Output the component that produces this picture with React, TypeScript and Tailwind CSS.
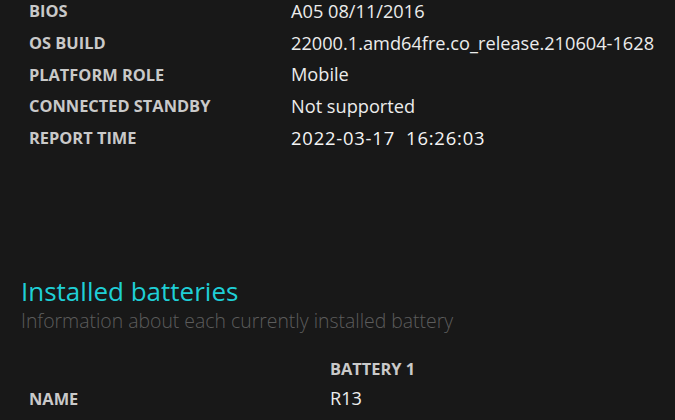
import React from "react";

const rows: [string, string][] = [
  ["BIOS", "A05 08/11/2016"],
  ["OS BUILD", "22000.1.amd64fre.co_release.210604-1628"],
  ["PLATFORM ROLE", "Mobile"],
  ["CONNECTED STANDBY", "Not supported"],
];

export default function App() {
  return (
    <div
      className="w-[675px] h-[420px] overflow-hidden bg-[#181818]"
      style={{ fontFamily: '"Open Sans", "Noto Sans", sans-serif' }}
    >
      <div className="-mt-[4px] pl-[29px]">
        {rows.map(([k, v]) => (
          <div key={k} className="flex items-center h-[31.6px]">
            <div className="w-[262px] text-[16.4px] font-bold text-[#c9c9c9]">{k}</div>
            <div className="text-[18.2px] text-[#ececec] whitespace-pre">{v}</div>
          </div>
        ))}
        <div className="flex items-center h-[31.6px]">
          <div className="w-[262px] text-[16.4px] font-bold text-[#c9c9c9]">REPORT TIME</div>
          <div className="text-[18.4px] font-medium tracking-[0.8px] text-[#f4f4f4] whitespace-pre">
            {"2022-03-17\u00a0\u00a016:26:03"}
          </div>
        </div>
      </div>
      <div className="mt-[122px] pl-[21px]">
        <div className="h-[30px] flex items-center text-[26px] font-medium text-[#1fcfd6] leading-none">Installed batteries</div>
        <div className="h-[30px] flex items-center text-[19.4px] font-light text-[#5c5c5c] leading-none">
          Information about each currently installed battery
        </div>
      </div>
      <div className="pl-[29px] mt-[18px]">
        <div className="flex items-center h-[30px]">
          <div className="w-[301px]" />
          <div className="text-[16.4px] font-bold text-[#c9c9c9]">BATTERY 1</div>
        </div>
        <div className="flex items-center h-[30px]">
          <div className="w-[301px] text-[16.4px] font-bold text-[#c9c9c9]">NAME</div>
          <div className="text-[18.2px] text-[#ececec]">R13</div>
        </div>
      </div>
    </div>
  );
}
